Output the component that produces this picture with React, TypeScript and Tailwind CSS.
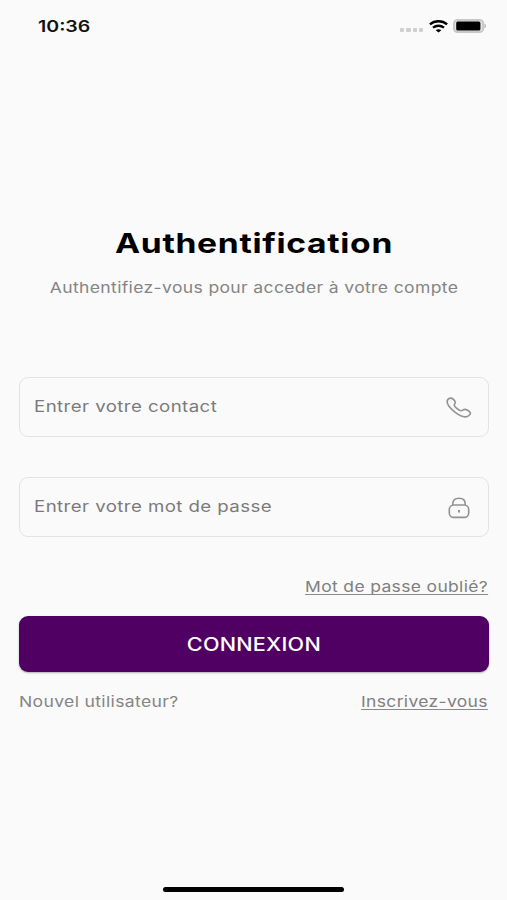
import type { ReactNode } from "react";

function StatusBar() {
  return (
    <header className="flex h-[52px] items-center justify-between pl-[38px] pr-[20px]">
      <span className="origin-left scale-x-[1.22] text-[16px] leading-5 font-semibold text-[#111]">10:36</span>
      <div className="flex items-center">
        <div className="mt-[7px] mr-[6px] flex gap-[2px]">
          {[0, 1, 2, 3].map((i) => (
            <span key={i} className="h-[4px] w-[4.2px] rounded-[1px] bg-[#cfcfcf]" />
          ))}
        </div>
        <svg width="19" height="13" viewBox="0 0 19 13" fill="none" stroke="#000" strokeWidth="2.3">
          <path d="M.9 4.4C5.6.2 13.4.2 18.1 4.4" />
          <path d="M4 7.7C7.1 5.1 11.9 5.1 15 7.7" />
          <path d="M9.5 12.6 6.7 10.2C8.3 9 10.7 9 12.3 10.2Z" fill="#000" stroke="none" />
        </svg>
        <svg className="ml-[5px]" width="34" height="14" viewBox="0 0 34 14">
          <rect x="1" y="1" width="29.2" height="12" rx="3.6" fill="#e4e4e4" stroke="#c8c8c8" strokeWidth="2" />
          <rect x="3.2" y="2.5" width="24.2" height="9" rx="1.5" fill="#000" />
          <path d="M31.5 4.8C33.500 5.400 33.500 8.600 31.500 9.200Z" fill="#b5b5b5" />
        </svg>
      </div>
    </header>
  );
}

function PhoneIcon() {
  return (
    <svg className="mt-[2px]" width="26" height="22" viewBox="0 0 26 22" fill="none" stroke="#929292" strokeWidth="1.6" strokeLinejoin="round">
      <path d="M1.200 4.200C1.500 2.600 3.200 1.100 4.900 1.100C6.700 1.100 8 2.600 9 4.300C10.100 6.200 8 7 8.200 8.200C8.500 9.900 12.600 13.400 14.900 13.700C16.500 13.800 17.200 12.200 19.200 12.400C21 12.700 22.900 13.900 24 15.200C25.200 16.700 23.200 18.700 21.200 19.500C18.400 20.600 13.600 18.700 9.300 15.400C4.500 11.700.8 7.200 1.200 4.200Z" />
    </svg>
  );
}

function LockIcon() {
  return (
    <svg className="mt-px mr-[2px]" width="22" height="22" viewBox="0 0 22 22" fill="none" stroke="#929292" strokeWidth="1.6">
      <path d="M4.800 8V6.700C4.800 3.200 7.200 1.200 11 1.200S17.200 3.200 17.200 6.700V8" />
      <rect x="1.300" y="8" width="19.400" height="12.400" rx="4.500" />
      <path d="M11 12.900V15.500" strokeWidth="2" />
    </svg>
  );
}

function Field({ label, icon }: { label: string; icon: ReactNode }) {
  return (
    <div className="flex h-[60px] items-center justify-between rounded-[9px] border-[1.5px] border-[#e3e3e3] pr-[16px] pl-[14px]">
      <span className="mb-[2px] origin-left scale-x-[1.165] text-[16px] leading-5 tracking-[0.37px] whitespace-nowrap text-[#7a7a7a]">
        {label}
      </span>
      {icon}
    </div>
  );
}

function TextLink({ children }: { children: string }) {
  return (
    <a className="origin-right scale-x-[1.165] text-[15px] leading-5 tracking-[0.3px] whitespace-nowrap text-[#808080] underline decoration-[#8a8a8a] decoration-1 underline-offset-[2px] [text-decoration-skip-ink:none]">
      {children}
    </a>
  );
}

export default function App() {
  return (
    <div className="flex h-[900px] w-[507px] flex-col overflow-hidden bg-[#fafafa] font-['Inter','Liberation_Sans',sans-serif]">
      <StatusBar />
      <main className="flex flex-1 flex-col pt-[176px] pr-[18px] pl-[19px]">
        <h1 className="scale-x-[1.245] text-center text-[27px] leading-8 font-bold tracking-[0.55px] text-black">
          Authentification
        </h1>
        <p className="mt-[18px] scale-x-[1.17] text-center text-[15px] leading-5 tracking-[0.3px] whitespace-nowrap text-[#858585]">
          Authentifiez-vous pour acceder à votre compte
        </p>
        <form className="mt-[79px] flex flex-col">
          <div className="flex flex-col gap-[40px]">
            <Field label="Entrer votre contact" icon={<PhoneIcon />} />
            <Field label="Entrer votre mot de passe" icon={<LockIcon />} />
          </div>
          <div className="mt-[40px] flex justify-end pr-px">
            <TextLink>Mot de passe oublié?</TextLink>
          </div>
          <button
            type="button"
            className="mt-[19px] flex h-[56px] items-center justify-center rounded-[9px] bg-[#500062] text-[18px] font-medium text-white shadow-[0_1px_2px_rgba(0,0,0,0.3)]"
          >
            <span className="scale-x-[1.2] tracking-[0.2px]">CONNEXION</span>
          </button>
          <div className="mt-[20px] flex justify-between pr-px">
            <span className="origin-left scale-x-[1.17] text-[15px] leading-5 tracking-[0.3px] text-[#858585]">
              Nouvel utilisateur?
            </span>
            <TextLink>Inscrivez-vous</TextLink>
          </div>
        </form>
      </main>
      <footer className="flex justify-center pb-[8px]">
        <div className="h-[5px] w-[181px] rounded-full bg-black" />
      </footer>
    </div>
  );
}
